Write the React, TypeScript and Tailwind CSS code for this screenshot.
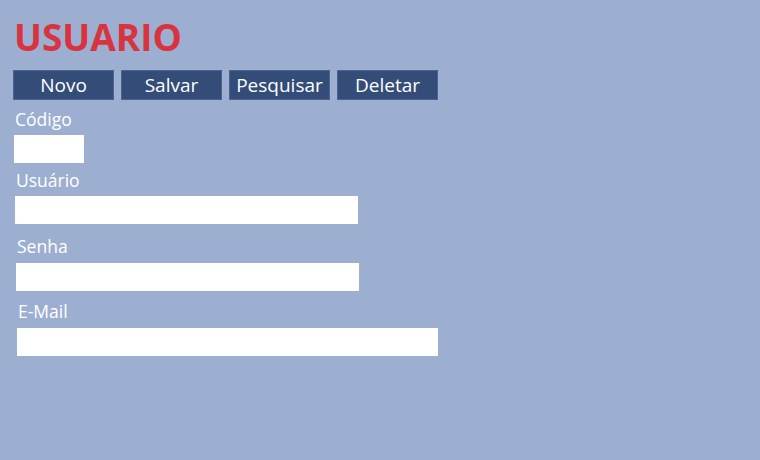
const buttons = ["Novo", "Salvar", "Pesquisar", "Deletar"];

const Field = ({
  label,
  left,
  width,
  labelTop,
  gap,
}: {
  label: string;
  left: string;
  width: string;
  labelTop: string;
  gap: string;
}) => (
  <div className={`flex flex-col ${left} ${labelTop}`}>
    <label className={`text-[17.5px] leading-[20px] text-white ${gap}`}>{label}</label>
    <input className={`h-[28px] bg-white outline-none ${width}`} />
  </div>
);

export default function App() {
  return (
    <div
      className="h-[460px] w-[760px] bg-[#9cafd1] overflow-hidden"
      style={{ fontFamily: '"Open Sans", "Noto Sans", sans-serif' }}
    >
      <h1 className="ml-[14px] pt-[13px] text-[37px] font-bold leading-[48px] text-[#d9333f]">
        USUARIO
      </h1>
      <div className="ml-[13px] mt-[9px] flex gap-[7px]">
        {buttons.map((b) => (
          <button
            key={b}
            className="h-[30px] w-[101px] border border-[#4a6390] bg-[#334d78] text-[19px] leading-[27px] text-white"
          >
            {b}
          </button>
        ))}
      </div>
      <div className="flex flex-col">
        <Field label="Código" left="ml-[14px]" width="w-[70px]" labelTop="mt-[9px]" gap="mb-[6px] ml-[1px]" />
        <Field label="Usuário" left="ml-[15px]" width="w-[343px]" labelTop="mt-[7px]" gap="mb-[6px] ml-[1px]" />
        <Field label="Senha" left="ml-[16px]" width="w-[343px]" labelTop="mt-[12px]" gap="mb-[7px] ml-[1px]" />
        <Field label="E-Mail" left="ml-[17px]" width="w-[421px]" labelTop="mt-[10px]" gap="mb-[7px] ml-[1px]" />
      </div>
    </div>
  );
}
